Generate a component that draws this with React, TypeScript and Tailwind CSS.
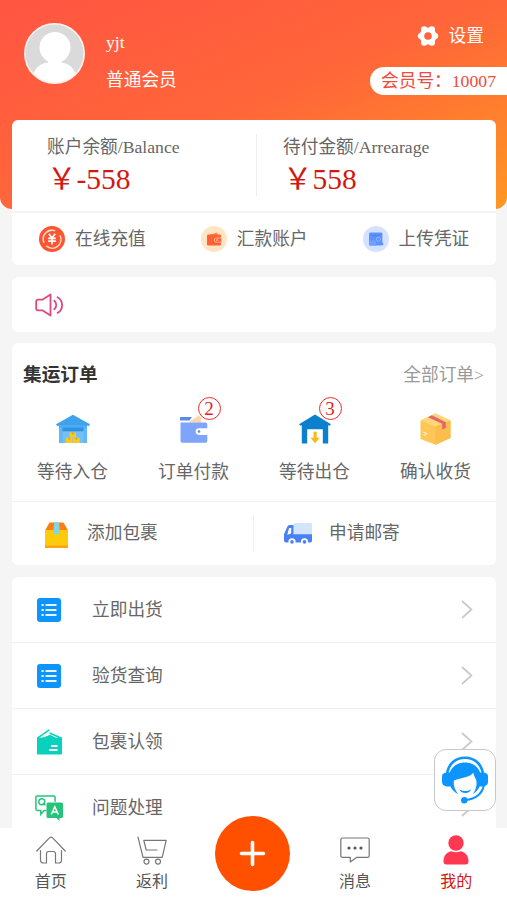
import type { ReactNode } from "react";

function GearIcon() {
  return (
    <svg className="w-[22px] h-[22px]" viewBox="0 0 22 22">
      <g fill="#fff">
        <circle cx="11" cy="11" r="8.6" />
        <circle cx="3.8" cy="11" r="3" />
        <circle cx="18.2" cy="11" r="3" />
        <circle cx="7.2" cy="4.4" r="3.2" />
        <circle cx="14.8" cy="4.4" r="3.2" />
        <circle cx="7.2" cy="17.6" r="3.2" />
        <circle cx="14.8" cy="17.6" r="3.2" />
      </g>
      <circle cx="11" cy="11" r="3.8" fill="#ff653c" />
    </svg>
  );
}

function RechargeIcon() {
  return (
    <svg className="w-[26px] h-[26px]" viewBox="0 0 26 26" fill="none">
      <circle cx="13" cy="13" r="13" fill="#fb5532" />
      <path
        d="M4.8 16.2A8.8 8.8 0 0 1 15.6 4.6M21.2 9.8A8.8 8.8 0 0 1 7.6 20.2"
        stroke="#ffd9cd"
        strokeWidth="1.5"
        strokeLinecap="round"
      />
      <path
        d="M9.8 7.8 13 12l3.2-4.2M9.2 12.4h7.6M9.2 15.2h7.6M13 12v6.6"
        stroke="#fff"
        strokeWidth="1.7"
      />
    </svg>
  );
}

function RemitIcon() {
  return (
    <svg className="w-[26px] h-[26px]" viewBox="0 0 26 26" fill="none">
      <circle cx="13" cy="13" r="13" fill="#fee6c4" />
      <path d="M7 9.5 15.8 6.4l1.5 3.4H7z" fill="#ff8b4a" />
      <rect x="6" y="8.6" width="14" height="11" rx="1.4" fill="#fc6236" />
      <path
        d="M20.4 12h-5a2.1 2.1 0 0 0 0 4.2h5z"
        fill="#fc6236"
        stroke="#ffb48b"
        strokeWidth="1"
      />
      <circle cx="16" cy="14.1" r=".8" fill="#ffd0b0" />
    </svg>
  );
}

function VoucherIcon() {
  return (
    <svg className="w-[26px] h-[26px]" viewBox="0 0 26 26" fill="none">
      <circle cx="13" cy="13" r="13" fill="#d5e1ff" />
      <rect x="6" y="6.4" width="13.4" height="13.2" rx="1.4" fill="#5b93fe" />
      <path d="M8.5 9.2c3 1.5 5 .8 9-.7" stroke="#4883f6" strokeWidth="1.3" />
      <path d="M6 14.6h7v5H7.4A1.4 1.4 0 0 1 6 18.2z" fill="#71a1ff" />
      <circle cx="15.5" cy="13.2" r="2.1" stroke="#8fb5ff" strokeWidth="1" />
      <path d="m17 15 3.2 3.8" stroke="#5b93fe" strokeWidth="1.6" />
    </svg>
  );
}

function SpeakerIcon() {
  return (
    <svg className="w-[29px] h-6" viewBox="0 0 29 24" fill="none">
      <g stroke="#e3457d" strokeWidth="1.8" strokeLinejoin="round" strokeLinecap="round">
        <path d="M3 6.7h4.3L15.5 1.5v21L7.3 17.3H3A1.8 1.8 0 0 1 1.2 15.5v-7A1.8 1.8 0 0 1 3 6.7z" />
        <path d="M19.3 7.8c2.6 2.2 2.6 6.2 0 8.4M22.6 4.3c6 3.6 6 12.2 0 15.6" />
      </g>
    </svg>
  );
}

function WarehouseInIcon() {
  return (
    <svg className="w-[34px] h-[30px]" viewBox="0 0 34 30">
      <path d="M3 9h28v20H3z" fill="#62b7f8" />
      <path d="M17 .8 34 10.2l-1.3 2L31 11.4H3l-1.7.8L0 10.2z" fill="#3ea2ee" />
      <path d="M3 11.4h28v2.2H3z" fill="#4badf3" />
      <path d="M6.5 13.5h21v4h-21z" fill="#3192de" />
      <path d="M6.5 17.5h21V29h-21z" fill="#73bff8" />
      <path d="M13.5 18.5h6.5v5h-6.5zM10 23.7h6.6V29H10zM17.2 23.7h6.6V29h-6.6z" fill="#f8ca27" />
      <path d="M15.8 18.5h2v2h-2zM12.4 23.7h1.8v2h-1.8zM19.6 23.7h1.8v2h-1.8z" fill="#dca91d" />
    </svg>
  );
}

function WalletIcon() {
  return (
    <svg className="w-[28px] h-[28px]" viewBox="0 0 28 28">
      <path d="M1.5 2H12L9.5 5.5H1a1.3 1.3 0 0 1 .5-3.5z" fill="#5b89e8" />
      <path d="M8 7.5 18.5.8 21 2v5.5z" fill="#fbd6ac" />
      <path
        d="M.5 7.5h25a1.8 1.8 0 0 1 1.8 1.8v4H19a3.3 3.3 0 0 0 0 6.6h8.3v6a1.8 1.8 0 0 1-1.8 1.8H2.3A1.8 1.8 0 0 1 .5 25.9z"
        fill="#7ea5fb"
      />
      <path d="M19 14.5h9v4h-9a2 2 0 0 1 0-4z" fill="#fff" />
      <circle cx="19" cy="16.5" r="1.3" fill="#5b89e8" />
    </svg>
  );
}

function WarehouseOutIcon() {
  return (
    <svg className="w-[32px] h-[30px]" viewBox="0 0 32 30">
      <path
        d="M16 .5 32 10.2l-1.5 1.6-1.3-.5V29.5h-5.4V15.3H8.2v14.2H2.8V11.3l-1.3.5L0 10.2z"
        fill="#0b80cd"
      />
      <path d="M14.5 17.8h3.2v6h3L16 29.3l-4.6-5.5h3.1z" fill="#fcb813" />
    </svg>
  );
}

function ParcelIcon() {
  return (
    <svg className="w-[31px] h-[32px]" viewBox="0 0 31 32">
      <path d="M15.5.5 30.5 7.5v17.5L15.5 31.7.5 26V7.5z" fill="#fdc656" />
      <path d="M15.5.5 30.5 7.5 15.5 13.5.5 7.5z" fill="#ffd777" />
      <path d="M15.5 13.5 30.5 7.5V25L15.5 31.7z" fill="#fbbd4b" />
      <path d="m8 4.2 3.8-1.9 14 7v5.5l-3.6 1.6v-5.7z" fill="#e6646a" />
      <path d="m3 19 4.2 1.9M3.5 21.5l2.5 1" stroke="#fff0ce" strokeWidth="1.2" />
    </svg>
  );
}

function BoxIcon() {
  return (
    <svg className="w-[23px] h-[26px]" viewBox="0 0 23 26">
      <path d="M4.5.5h14L23 8.5H0z" fill="#fb7e13" />
      <path d="M0 8h23v16.5A1.5 1.5 0 0 1 21.5 26h-20A1.5 1.5 0 0 1 0 24.5z" fill="#fecb0b" />
      <path d="M0 23.6h23V26H0z" fill="#fba313" />
      <path d="M9.2.5h4.8l.8 8v4.3l-1.7-1.2-1.5 1.2-1.7-1.2-1.5 1.2V8.5z" fill="#80d6e3" />
    </svg>
  );
}

function TruckIcon() {
  return (
    <svg className="w-[28px] h-[23px]" viewBox="0 0 28 23">
      <path d="M9.5 1.5A1.5 1.5 0 0 1 11 0h15.5A1.5 1.5 0 0 1 28 1.5V12H9.5z" fill="#d3e5fd" />
      <path
        d="M9.5 2v9.2H28v6.6a1.6 1.6 0 0 1-1.6 1.6H2a2 2 0 0 1-2-2v-6.2L3.4 3.5A2.4 2.4 0 0 1 5.6 2z"
        fill="#4a80f5"
      />
      <path d="M5.2 5h2v5.5l-4 1.2z" fill="#fff" />
      <g fill="#4a80f5" stroke="#fff" strokeWidth="1.8">
        <circle cx="8" cy="18.9" r="2.7" />
        <circle cx="20.5" cy="18.9" r="2.7" />
      </g>
    </svg>
  );
}

function ListIcon() {
  return (
    <svg className="w-6 h-6" viewBox="0 0 24 24">
      <rect width="24" height="24" rx="3" fill="#0c95ff" />
      <path
        d="M4.5 7h2.2M8.5 7H19.5M4.5 12h2.2M8.5 12H19.5M4.5 17h2.2M8.5 17H19.5"
        stroke="#e6f5ff"
        strokeWidth="1.8"
      />
    </svg>
  );
}

function ClaimIcon() {
  return (
    <svg className="w-[25px] h-[26px]" viewBox="0 0 25 26">
      <path d="M1 8.5h23a1 1 0 0 1 1 1V24.5a1 1 0 0 1-1 1H1a1 1 0 0 1-1-1V9.5a1 1 0 0 1 1-1z" fill="#08d1be" />
      <path d="M.3 9.2 12.3.9M12.5 4 24.5 9.2" stroke="#08d1be" strokeWidth="1.6" />
      <path d="M6.5 8.6 12.5 5.6l8 3.4z" fill="#fff" />
      <path d="M4 9.5 13 5.8l7 3.4z" fill="#08d1be" />
      <path d="M14 17h6.5M12 21h8.5" stroke="#fff" strokeWidth="1.8" />
    </svg>
  );
}

function QaIcon() {
  return (
    <svg className="w-[28px] h-[26px]" viewBox="0 0 28 26" fill="none">
      <path
        d="M11.5 15.5H9l-3.2 3.7v-3.7H2.3A1.4 1.4 0 0 1 .9 14.1V2.3A1.4 1.4 0 0 1 2.3.9h16.4a1.4 1.4 0 0 1 1.4 1.4v4.5"
        stroke="#27c37b"
        strokeWidth="1.5"
      />
      <circle cx="6.8" cy="6.7" r="3" stroke="#27c37b" strokeWidth="1.4" />
      <path d="m7.8 7.9 2.7 2.6" stroke="#27c37b" strokeWidth="1.3" />
      <path
        d="M13 7.5h13.5A1.5 1.5 0 0 1 28 9v12.5a1.5 1.5 0 0 1-1.5 1.5h-2v3l-3-3H13a1.5 1.5 0 0 1-1.5-1.5V9A1.5 1.5 0 0 1 13 7.5z"
        fill="#27c37b"
      />
      <path d="m16.3 19.5 3.5-7.7 3.5 7.7M17.5 17h4.6" stroke="#fff" strokeWidth="1.5" />
    </svg>
  );
}

function HomeIcon() {
  return (
    <svg className="w-[30px] h-[28px]" viewBox="0 0 30 28" fill="none">
      <g stroke="#777" strokeWidth="1.2" strokeLinecap="round" strokeLinejoin="round">
        <path d="m.8 15 12.9-13.3a1.9 1.9 0 0 1 2.7 0L29.2 15" />
        <path d="M4.5 14.5v9.8a2.7 2.7 0 0 0 2.7 2.7h3.3v-9.2a2.3 2.3 0 0 1 2.3-2.3h4.4a2.3 2.3 0 0 1 2.3 2.3V27h3.3a2.7 2.7 0 0 0 2.7-2.7v-9.8" />
      </g>
    </svg>
  );
}

function CartIcon() {
  return (
    <svg className="w-[30px] h-[29px]" viewBox="0 0 30 29" fill="none">
      <g stroke="#777" strokeWidth="1.2" strokeLinecap="round" strokeLinejoin="round">
        <path d="M1 1.2 6 21.3h19.2L29.2 4.3H6.8L9.2 14H20" />
        <circle cx="9.5" cy="25.6" r="2.5" />
        <circle cx="21" cy="25.6" r="2.5" />
      </g>
    </svg>
  );
}

function MessageIcon() {
  return (
    <svg className="w-[30px] h-[26px]" viewBox="0 0 30 26" fill="none">
      <path
        d="M2.5 1h25a1.7 1.7 0 0 1 1.7 1.7v16a1.7 1.7 0 0 1-1.7 1.7H16.5L10.3 25v-4.6H2.5a1.7 1.7 0 0 1-1.7-1.7v-16A1.7 1.7 0 0 1 2.5 1z"
        stroke="#777"
        strokeWidth="1.2"
        strokeLinejoin="round"
      />
      <g fill="#555">
        <circle cx="9" cy="11" r="1.6" />
        <circle cx="15" cy="11" r="1.6" />
        <circle cx="21" cy="11" r="1.6" />
      </g>
    </svg>
  );
}

function UserIcon() {
  return (
    <svg className="w-[26px] h-[30px]" viewBox="0 0 26 30" fill="#fe3850">
      <circle cx="13" cy="8" r="7.7" />
      <path d="M8.3 16.2c3 1.5 6.4 1.5 9.4 0 5 1.2 7.8 4.6 7.8 10.3a3 3 0 0 1-3 3h-19a3 3 0 0 1-3-3c0-5.7 2.8-9.1 7.8-10.3z" />
    </svg>
  );
}

function ServiceIcon() {
  return (
    <svg className="w-[46px] h-[48px]" viewBox="0 0 46 48" fill="none">
      <path d="M5 18C6.5 7.5 13.5 1.7 23 1.7S39.5 7.5 41 18" stroke="#0c95ff" strokeWidth="2.6" />
      <path
        d="M7.500 28C4.500 14.500 12.500 6.500 23 6.500S41.500 14.500 38.500 28c-1 4-3.500 7.500-7.500 10 2.700-4 4-8.500 3.500-12.500-.4-3.500-2.800-5-3.300-9C28.500 21.500 19 21.500 12 24.500c-1 4 .8 9.500 4.500 14C11.500 36 8.500 32 7.500 28z"
        fill="#0c95ff"
      />
      <path d="M4.5 16.5H8.5v14H4.5Q0 29.5 0 26v-6q0-3 4.5-3.5zM41.5 16.5H37.5v14h4q4.5-1 4.5-4.5v-6q0-3-4.5-3.5z" fill="#0c95ff" />
      <path d="M42 29C40 38.5 34 43 23.5 44" stroke="#0c95ff" strokeWidth="2" />
      <circle cx="22.3" cy="44.2" r="3.2" fill="#0c95ff" />
      <path d="M17.500 33.500q5.800 3.200 11.500 0-1 3.400-5.700 3.400t-5.800-3.400z" fill="#0c95ff" />
    </svg>
  );
}

const quickLinks = [
  { title: "在线充值", icon: <RechargeIcon /> },
  { title: "汇款账户", icon: <RemitIcon /> },
  { title: "上传凭证", icon: <VoucherIcon /> },
];

const orderStates = [
  { title: "等待入仓", icon: <WarehouseInIcon /> },
  { title: "订单付款", icon: <WalletIcon />, count: 2 },
  { title: "等待出仓", icon: <WarehouseOutIcon />, count: 3 },
  { title: "确认收货", icon: <ParcelIcon /> },
];

const menuItems = [
  { title: "立即出货", icon: <ListIcon /> },
  { title: "验货查询", icon: <ListIcon /> },
  { title: "包裹认领", icon: <ClaimIcon /> },
  { title: "问题处理", icon: <QaIcon /> },
];

function Amount({ label, value }: { label: string; value: string }) {
  return (
    <div className="pt-[15px]">
      <div className="leading-6">{label}</div>
      <div className="mt-[5px] h-[30px] text-[29.5px] leading-[30px] text-[#d3190f]">￥{value}</div>
    </div>
  );
}

function TabItem({ title, icon, active }: { title: string; icon: ReactNode; active?: boolean }) {
  return (
    <div className={`flex-1 flex flex-col items-center text-[16px] ${active ? "text-[#d3190f]" : "text-[#555]"}`}>
      <div className="h-11 flex items-center justify-center">{icon}</div>
      <span className="leading-[20px]">{title}</span>
    </div>
  );
}

export default function App() {
  return (
    <div className="relative w-full h-[900px] overflow-hidden flex flex-col bg-[#f5f5f5] text-[17.7px] text-[#666] font-['Liberation_Serif','Noto_Sans_CJK_SC',sans-serif] whitespace-nowrap">
      {/* Profile header */}
      <header className="h-[209px] shrink-0 rounded-b-xl bg-[linear-gradient(to_bottom_right,#ff5543_0%,#ff6639_50%,#ff9722_100%)] text-white flex">
        <svg className="w-[61px] h-[61px] ml-6 mt-[23px]" viewBox="0 0 61 61">
          <clipPath id="avatar">
            <circle cx="30.5" cy="30.5" r="29" />
          </clipPath>
          <circle cx="30.5" cy="30.5" r="30.5" fill="#fff3ef" />
          <g clipPath="url(#avatar)">
            <path d="M0 0h61v61H0z" fill="#dadada" />
            <circle cx="31" cy="24.5" r="15.5" fill="#fff" />
            <path d="M24 35h13v4.5c8 .5 13 6 15 12V61H9V51.5c2-6 7-11.5 15-12z" fill="#fff" />
          </g>
        </svg>
        <div className="ml-[21px] pt-[30px]">
          <div className="leading-6">yjt</div>
          <div className="leading-6 mt-[14px]">普通会员</div>
        </div>
        <div className="ml-auto pt-6 flex flex-col items-end">
          <div className="flex items-center gap-[10px] pr-[23px] leading-6">
            <GearIcon />
            <span>设置</span>
          </div>
          <div className="mt-[19px] h-[28px] w-[137px] rounded-l-full bg-white text-[#ef4b3d] leading-[28px] pl-[11px]">
            会员号：10007
          </div>
        </div>
      </header>

      <main className="relative -mt-[89px] h-[708px] shrink-0 overflow-hidden pl-3 pr-[11px]">
        {/* Balance */}
        <section className="h-[145px] rounded-md bg-white">
          <div className="h-[91px] flex pl-[35px]">
            <div className="w-[209px]">
              <Amount label="账户余额/Balance" value="-558" />
            </div>
            <div className="w-px h-[62px] mt-[14px] mr-[26px] bg-[#eee]" />
            <Amount label="待付金额/Arrearage" value="558" />
          </div>
          <div className="h-[54px] border-t-2 border-[#f5f5f5] flex items-center pl-[27px] gap-[55px]">
            {quickLinks.map((link) => (
              <div key={link.title} className="flex items-center gap-[10px]">
                {link.icon}
                <span>{link.title}</span>
              </div>
            ))}
          </div>
        </section>

        {/* Notice */}
        <section className="h-[55px] mt-3 rounded-md bg-white flex items-center pl-[23px]">
          <SpeakerIcon />
        </section>

        {/* Orders */}
        <section className="h-[222px] mt-[11px] rounded-md bg-white">
          <div className="h-[158px]">
            <div className="flex items-center justify-between pl-[11px] pr-3 pt-[19px] leading-[26px]">
              <h2 className="text-[18.7px] font-bold text-[#333]">集运订单</h2>
              <span className="text-[#999]">全部订单&gt;</span>
            </div>
            <div className="grid grid-cols-4 mt-[21px]">
              {orderStates.map((state) => (
                <div key={state.title} className="flex flex-col items-center">
                  <div className="relative h-10 flex items-center justify-center">
                    {state.icon}
                    {state.count && (
                      <span className="absolute left-1/2 ml-[4px] -top-[12px] w-[23px] h-[23px] rounded-full border-[1.5px] border-[#ee2b2b] bg-white text-[19px] text-[#e31d1d] leading-[22px] text-center">
                        {state.count}
                      </span>
                    )}
                  </div>
                  <span className="leading-6 mt-[11px]">{state.title}</span>
                </div>
              ))}
            </div>
          </div>
          <div className="h-16 border-t border-[#f3f3f3] flex items-center">
            <div className="w-[241px] flex items-center pl-[33px] gap-[19px]">
              <span className="pt-[2px]">
                <BoxIcon />
              </span>
              <span>添加包裹</span>
            </div>
            <div className="w-px h-[36px] bg-[#eee]" />
            <div className="flex items-center pl-[30px] gap-[17px]">
              <span className="pt-[3px]">
                <TruckIcon />
              </span>
              <span>申请邮寄</span>
            </div>
          </div>
        </section>

        {/* Menu */}
        <section className="mt-3 rounded-t-md bg-white">
          {menuItems.map((item) => (
            <div key={item.title} className="h-[66px] flex items-center pl-[23px] pr-[23px] border-b border-[#f0f0f0]">
              <span className="w-7 flex justify-center">{item.icon}</span>
              <span className="ml-[29px] pt-[2px]">{item.title}</span>
              <svg className="ml-auto w-3 h-[19px]" viewBox="0 0 12 19" fill="none">
                <path d="m1 1 9.5 8.5L1 18" stroke="#c9c9c9" strokeWidth="1.7" />
              </svg>
            </div>
          ))}
        </section>
      </main>

      {/* Bottom tabs */}
      <nav className="relative h-[72px] shrink-0 bg-white flex">
        <TabItem title="首页" icon={<HomeIcon />} />
        <TabItem title="返利" icon={<CartIcon />} />
        <div className="flex-1 flex justify-center">
          <div className="w-[75px] h-[75px] -mt-3 -ml-[3px] rounded-full bg-[#ff5000] flex items-center justify-center">
            <svg className="w-[27px] h-[27px]" viewBox="0 0 27 27">
              <path d="M13.5 2.5v22M2.5 13.5h22" stroke="#fff" strokeWidth="3.6" strokeLinecap="round" />
            </svg>
          </div>
        </div>
        <TabItem title="消息" icon={<MessageIcon />} />
        <TabItem title="我的" icon={<UserIcon />} active />
      </nav>

      {/* Floating customer service */}
      <div className="absolute left-[434px] top-[749px] w-[62px] h-[62px] rounded-xl border border-[#c8c8c8] bg-white flex items-center justify-center">
        <ServiceIcon />
      </div>
    </div>
  );
}
